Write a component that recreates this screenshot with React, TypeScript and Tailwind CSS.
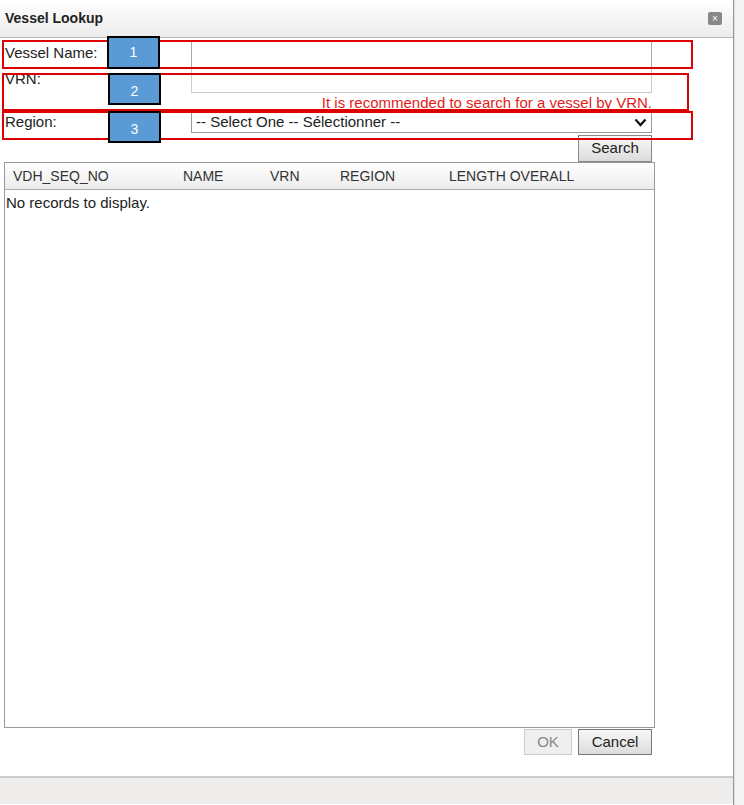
export default function App() {
  const f = { fontFamily: '"Liberation Sans", Arial, sans-serif' };
  const blue = "absolute w-[53px] bg-[#5b9bd5] border-2 border-black text-white text-[14px] flex items-center justify-center";
  return (
    <div className="relative w-[744px] h-[805px] bg-white overflow-hidden text-[15px] text-[#222]" style={f}>
      <div className="flex h-full">
        <div className="w-[734px] flex flex-col border-r border-[#999]">
          <div className="h-[38px] bg-gradient-to-b from-white to-[#ececec] flex items-center justify-between pl-[5px] pr-[11px] border-b border-[#bbb]">
            <span className="font-bold text-[14px] text-[#222]">Vessel Lookup</span>
            <span className="w-[14px] h-[13px] bg-[#888] rounded-[2px] text-white text-[10px] leading-[13px] text-center">×</span>
          </div>
          <div className="flex-1 flex flex-col pl-[4px] pr-[81px]">
            <div className="flex h-[29px] items-center">
              <span className="w-[187px] pl-[1px] pt-[2px]">Vessel Name:</span>
              <div className="flex-1 h-[27px] mt-[3px] border border-[#aaa] bg-white" />
            </div>
            <div className="flex h-[44px]">
              <span className="w-[187px] pl-[1px] leading-[16px] pt-[4px]">VRN:</span>
              <div className="flex-1 flex flex-col">
                <div className="h-[27px] border border-t-0 border-[#ccc] bg-white" />
                <div className="text-right text-[#e31b1b] underline text-[15px] leading-[17px] mt-[1px]">It is recommended to search for a vessel by VRN.</div>
              </div>
            </div>
            <div className="flex h-[22px] items-center">
              <span className="w-[187px] pl-[1px]">Region:</span>
              <div className="flex-1 h-[22px] border border-[#999] flex items-center justify-between px-[4px] text-[15px]">
                <span>-- Select One -- Sélectionner --</span>
                <svg width="13" height="9" viewBox="0 0 13 9"><path d="M1.5 1.5 L6.5 7 L11.5 1.5" stroke="#111" strokeWidth="2.2" fill="none" /></svg>
              </div>
            </div>
            <div className="flex justify-end mt-[2px]">
              <button className="w-[74px] h-[27px] border border-[#888] bg-gradient-to-b from-[#f8f8f8] to-[#dcdcdc] text-[15px]">Search</button>
            </div>
            <div className="h-[566px] border border-[#999] mr-[-3px] flex flex-col">
              <div className="h-[27px] flex items-center bg-gradient-to-b from-white to-[#ececec] border-b border-[#aaa] text-[14px] text-[#333]">
                <span className="w-[178px] pl-[8px]">VDH_SEQ_NO</span>
                <span className="w-[87px]">NAME</span>
                <span className="w-[70px]">VRN</span>
                <span className="w-[109px]">REGION</span>
                <span>LENGTH OVERALL</span>
              </div>
              <div className="pt-[2px] pl-[1px]">No records to display.</div>
            </div>
            <div className="flex justify-end gap-[6px] mt-[1px]">
              <button className="w-[48px] h-[26px] border border-[#ccc] bg-[#efefef] text-[#888]">OK</button>
              <button className="w-[74px] h-[26px] border border-[#777] bg-gradient-to-b from-[#f8f8f8] to-[#dcdcdc]">Cancel</button>
            </div>
          </div>
          <div className="h-[28px] mb-[1px] bg-[#efecec] border-t-2 border-[#ccc]" />
        </div>
        <div className="flex-1 bg-[#f4f4f4] border-l border-[#ddd]" />
      </div>
      <div className="absolute left-[2px] top-[40px] w-[691px] h-[29px] border-2 border-[#d00]" />
      <div className="absolute left-[2px] top-[73px] w-[687px] h-[38px] border-2 border-[#d00]" />
      <div className="absolute left-[2px] top-[111px] w-[691px] h-[29px] border-2 border-[#d00]" />
      <div className={blue + " left-[107px] top-[36px] h-[33px]"}>1</div>
      <div className={blue + " left-[108px] top-[73px] h-[32px] pt-[4px]"}>2</div>
      <div className={blue + " left-[108px] top-[111px] h-[32px] pt-[4px]"}>3</div>
    </div>
  );
}
